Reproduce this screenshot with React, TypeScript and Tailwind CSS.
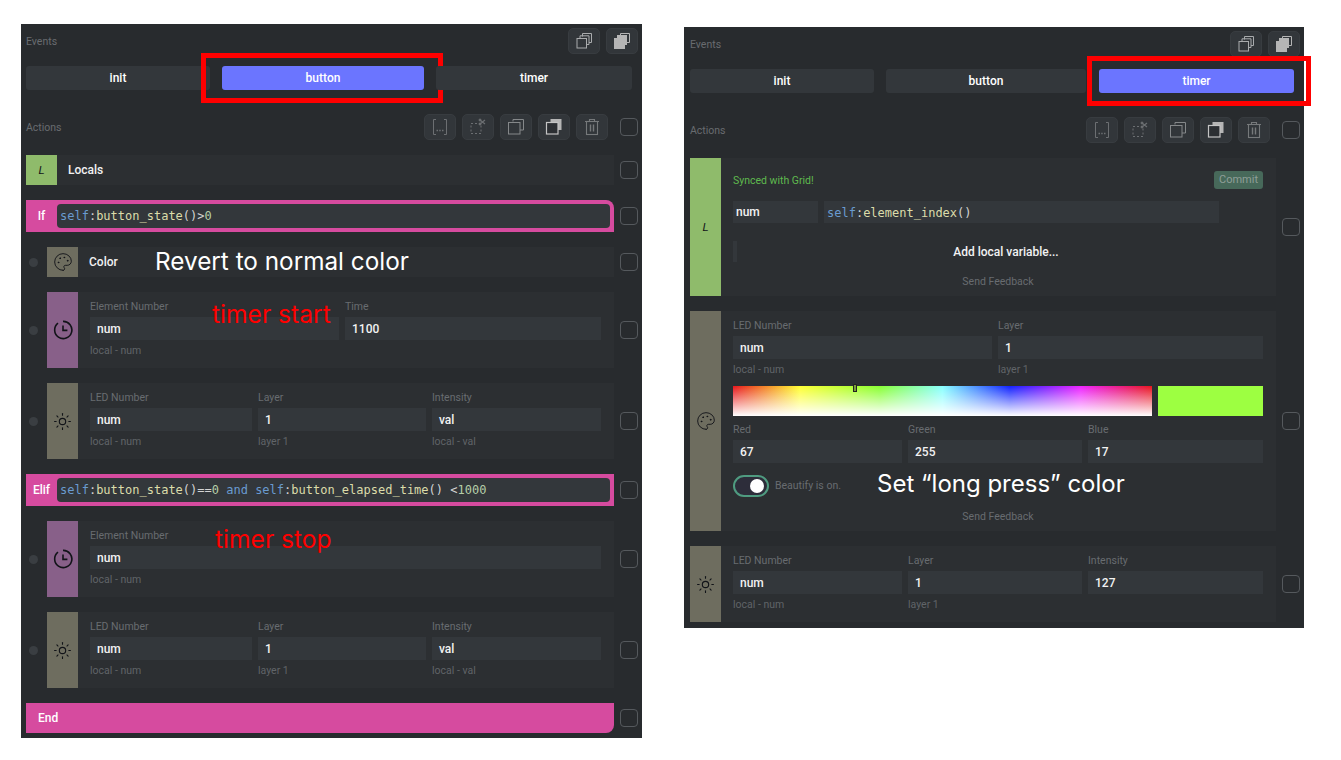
import React from "react";
import { Palette, Sun } from "lucide-react";

const PINK = "bg-[#d64b9f]";

function IconButton({ children }: { children: React.ReactNode }) {
  return (
    <div className="flex h-[26px] w-[32px] items-center justify-center rounded-[5px] border border-[#383c40] bg-[#32363a]">
      {children}
    </div>
  );
}

const StackOutline = () => (
  <svg width="18" height="18" viewBox="0 0 18 18" fill="none" stroke="#a9abad" strokeWidth="1">
    <path d="M7.5 4.5V1.5H16.5V10.5H14" />
    <path d="M5 6.5V3.8H14V12.5H12" />
    <rect x="2" y="6.5" width="9.5" height="9.5" fill="#32363a" />
  </svg>
);
const StackFilled = () => (
  <svg width="18" height="18" viewBox="0 0 18 18" fill="none" stroke="#b5b5b5" strokeWidth="1">
    <path d="M7.5 4.5V1.5H16.5V10.5H14" />
    <rect x="4.5" y="3.5" width="9" height="9" fill="#b5b5b5" />
    <rect x="1.5" y="6.5" width="10" height="10" fill="#b5b5b5" />
  </svg>
);
const Brackets = () => (
  <svg width="18" height="18" viewBox="0 0 18 18" fill="none" stroke="#6c6f72" strokeWidth="1">
    <path d="M5 1.5H2.5V16.5H5M13 1.5H15.5V16.5H13" />
    <path d="M5.5 12.5h1.5M8.2 12.5h1.5M11 12.5h1.5" strokeWidth="1.4" />
  </svg>
);
const Cut = () => (
  <svg width="18" height="18" viewBox="0 0 18 18" fill="none" stroke="#6c6f72" strokeWidth="1">
    <rect x="2" y="5.5" width="10" height="10" strokeDasharray="2 2" />
    <path d="M11 2l5 4M11 6l5-4" strokeWidth="1.2" />
    <circle cx="11" cy="2" r="1" fill="#6c6f72" />
    <circle cx="11" cy="6" r="1" fill="#6c6f72" />
  </svg>
);
const CopyOutline = () => (
  <svg width="18" height="18" viewBox="0 0 18 18" fill="none" stroke="#85888a" strokeWidth="1">
    <path d="M6 3.5V1.5H16.5V12H13" />
    <rect x="1.5" y="4.5" width="11.5" height="11.5" />
  </svg>
);
const CopyFilled = () => (
  <svg width="18" height="18" viewBox="0 0 18 18" fill="none">
    <rect x="5.5" y="1" width="11" height="11" fill="#b5b5b5" />
    <rect x="1.5" y="4.5" width="11.5" height="11.5" fill="#2c2f33" stroke="#c4c4c4" strokeWidth="1.2" />
  </svg>
);
const Trash = () => (
  <svg width="18" height="18" viewBox="0 0 18 18" fill="none" stroke="#76797b" strokeWidth="1.1">
    <path d="M2 3.5H16M6.5 3.5V1.5H11.5V3.5" />
    <rect x="3.5" y="3.5" width="11" height="13" />
    <path d="M7.5 6.5V13.5M10.5 6.5V13.5" strokeWidth="1.4" />
  </svg>
);
const ClockIcon = () => (
  <svg width="20" height="20" viewBox="0 0 20 20" fill="none" stroke="#111318" strokeWidth="1.6">
    <path d="M5 3.2A8.6 8.6 0 1 0 10 1.4" />
    <path d="M10 5.4V10.4H14.4" />
  </svg>
);

function Checkbox() {
  return <div className="h-[18px] w-[18px] shrink-0 rounded-[4px] border border-[#55595d]" />;
}

function Code({ parts }: { parts: [string, string][] }) {
  return (
    <span className="whitespace-pre font-['DejaVu_Sans_Mono',monospace] text-[12px]">
      {parts.map(([t, c], i) => (
        <span key={i} style={{ color: c }}>
          {t}
        </span>
      ))}
    </span>
  );
}

const BLUE = "#6a9bd0";
const FN = "#dcdcaa";
const OP = "#d4d4d4";
const NUM = "#b5cea8";

function Field({ label, value, helper, w }: { label: string; value: string; helper?: string; w: string }) {
  return (
    <div className={w}>
      <div className="mb-[4px] h-[14px] text-[10.5px] leading-[16px] text-[#686c70]">{label}</div>
      <div className="flex h-[23px] items-center bg-[#33373b] pl-[7px] text-[12px] font-[500] text-[#f2f2f2]">{value}</div>
      {helper !== undefined && <div className="mt-[3px] h-[14px] text-[10.5px] leading-[16px] text-[#606468]">{helper}</div>}
    </div>
  );
}

function Row({ children }: { children: React.ReactNode }) {
  return (
    <div className="flex items-center gap-[6px] pr-[4px]">
      <div className="min-w-0 flex-1">{children}</div>
      <Checkbox />
    </div>
  );
}

function Block({ color, icon, dot, children, minH }: { color: string; icon: React.ReactNode; dot?: boolean; children: React.ReactNode; minH: string }) {
  return (
    <div className="flex items-center">
      {dot && (
        <div className="flex w-[21px] shrink-0 justify-start pl-[3px]">
          <div className="h-[9px] w-[9px] rounded-full bg-[#3a3e42]" />
        </div>
      )}
      <div className={`flex min-w-0 flex-1 bg-[#2c2f32] ${minH}`}>
        <div className={`flex w-[31px] shrink-0 items-center justify-center ${color}`}>{icon}</div>
        {children}
      </div>
    </div>
  );
}

const TAUPE = "bg-[#6e6d5f]";
const PURPLE = "bg-[#886089]";
const GREEN = "bg-[#8fbb6b]";
const sun = <Sun size={19} strokeWidth={1.4} color="#111318" />;
const palette = <Palette size={20} strokeWidth={1.1} color="#111318" />;
const lIcon = <span className="font-['Liberation_Sans',sans-serif] text-[11px] italic text-[#111318]">L</span>;

function Body({ children }: { children: React.ReactNode }) {
  return <div className="relative min-w-0 flex-1 pl-[12px] pr-[13px] pt-[7px] pb-[11px]">{children}</div>;
}

function TimerBlock({ second, note, noteClass }: { second?: boolean; note: string; noteClass: string }) {
  return (
    <Block color={PURPLE} icon={<ClockIcon />} dot minH="h-[76px]">
      <Body>
        <div className="flex gap-[6px]">
          {second ? (
            <>
              <Field w="w-[249px]" label="Element Number" value="num" helper="local - num" />
              <Field w="flex-1" label="Time" value="1100" />
            </>
          ) : (
            <Field w="flex-1" label="Element Number" value="num" helper="local - num" />
          )}
        </div>
        <span className={`absolute whitespace-nowrap font-['Inter',sans-serif] text-[24.6px] leading-[30px] text-[#ff0000] ${noteClass}`}>{note}</span>
      </Body>
    </Block>
  );
}

function LedBlock({ dot, w, third, helper3 }: { dot?: boolean; w: string[]; third: string; helper3?: string }) {
  return (
    <Block color={TAUPE} icon={sun} dot={dot} minH="h-[76px]">
      <Body>
        <div className="flex gap-[6px]">
          <Field w={w[0]} label="LED Number" value="num" helper="local - num" />
          <Field w={w[1]} label="Layer" value="1" helper="layer 1" />
          <Field w={w[2]} label="Intensity" value={third} helper={helper3} />
        </div>
      </Body>
    </Block>
  );
}

function Conditional({ label, parts, rounded }: { label: string; parts: [string, string][]; rounded: string }) {
  return (
    <div className={`flex h-[32px] ${PINK} py-[4px] pr-[4px] ${rounded}`}>
      <div className="flex w-[31px] shrink-0 items-center justify-center text-[12px] font-[480] text-white">{label}</div>
      <div className="flex min-w-0 flex-1 items-center rounded-[4px] bg-[#33373b] pl-[3px]">
        <Code parts={parts} />
      </div>
    </div>
  );
}

function Tab({ label, w, active, box }: { label: string; w: string; active?: boolean; box?: string }) {
  return (
    <div className={`relative flex h-[24px] items-center justify-center rounded-[3px] text-[12px] font-[480] text-white ${w} ${active ? "bg-[#6b75ff]" : "bg-[#33373b]"}`}>
      {label}
      {box && <div className={`absolute border-[5px] border-[#ff0000] ${box}`} />}
    </div>
  );
}

function Header({ tabs }: { tabs: React.ReactNode }) {
  return (
    <>
      <div className="flex h-[26px] items-center justify-between pr-[4px]">
        <span className="pt-[2px] text-[10.5px] text-[#686c70]">Events</span>
        <div className="flex gap-[6px]">
          <IconButton><StackOutline /></IconButton>
          <IconButton><StackFilled /></IconButton>
        </div>
      </div>
      <div className="mt-[12px] flex">{tabs}</div>
      <div className="mt-[24px] flex h-[26px] items-center justify-between pr-[4px]">
        <span className="pt-[2px] text-[10.5px] text-[#686c70]">Actions</span>
        <div className="flex items-center gap-[12px]">
          <div className="flex gap-[6px]">
            <IconButton><Brackets /></IconButton>
            <IconButton><Cut /></IconButton>
            <IconButton><CopyOutline /></IconButton>
            <IconButton><CopyFilled /></IconButton>
            <IconButton><Trash /></IconButton>
          </div>
          <Checkbox />
        </div>
      </div>
    </>
  );
}

function LeftPanel() {
  return (
    <div className="w-[621px] shrink-0 bg-[#282b2e] pb-[5px] pl-[5px] pt-[4px]">
      <Header
        tabs={
          <>
            <Tab label="init" w="w-[184px]" />
            <Tab label="button" w="ml-[12px] w-[202px]" active box="-left-[21px] -right-[19px] -top-[13px] -bottom-[13px]" />
            <Tab label="timer" w="ml-[12px] w-[196px]" />
          </>
        }
      />
      <div className="mt-[15px] flex flex-col gap-[15px]">
        <Row>
          <Block color={GREEN} icon={lIcon} minH="h-[30px]">
            <div className="flex items-center pl-[11px] text-[12px] font-[500] text-[#f2f2f2]">Locals</div>
          </Block>
        </Row>
        <Row>
          <Conditional
            label="If"
            rounded="rounded-tr-[8px]"
            parts={[["self", BLUE], [":", OP], ["button_state", FN], ["()>", OP], ["0", NUM]]}
          />
        </Row>
        <Row>
          <Block color={TAUPE} icon={palette} dot minH="h-[30px]">
            <div className="flex items-center pl-[11px]">
              <span className="w-[66px] text-[12px] font-[500] text-[#f2f2f2]">Color</span>
              <span className="mb-[1px] whitespace-nowrap font-['Inter',sans-serif] text-[24.3px] text-white">Revert to normal color</span>
            </div>
          </Block>
        </Row>
        <Row>
          <TimerBlock second note="timer start" noteClass="left-[134px] top-[7px]" />
        </Row>
        <Row>
          <LedBlock dot w={["w-[162px]", "w-[168px]", "w-[169px]"]} third="val" helper3="local - val" />
        </Row>
        <Row>
          <Conditional
            label="Elif"
            rounded=""
            parts={[
              ["self", BLUE], [":", OP], ["button_state", FN], ["()==", OP], ["0", NUM], [" ", OP], ["and", BLUE], [" ", OP],
              ["self", BLUE], [":", OP], ["button_elapsed_time", FN], ["() <", OP], ["1000", NUM],
            ]}
          />
        </Row>
        <Row>
          <TimerBlock note="timer stop" noteClass="left-[137px] top-[3px]" />
        </Row>
        <Row>
          <LedBlock dot w={["w-[162px]", "w-[168px]", "w-[169px]"]} third="val" helper3="local - val" />
        </Row>
        <Row>
          <div className={`flex h-[30px] items-center rounded-br-[8px] pl-[12px] text-[12px] font-[480] text-white ${PINK}`}>End</div>
        </Row>
      </div>
    </div>
  );
}

function Feedback() {
  return <div className="h-[14px] text-center text-[10.5px] leading-[16px] text-[#686c70]">Send Feedback</div>;
}

function RightPanel() {
  return (
    <div className="mt-[3px] w-[620px] shrink-0 bg-[#282b2e] pb-[6px] pl-[6px] pt-[4px]">
      <Header
        tabs={
          <>
            <Tab label="init" w="w-[184px]" />
            <Tab label="button" w="ml-[12px] w-[200px]" />
            <Tab label="timer" w="ml-[13px] w-[195px]" active box="-left-[12px] -right-[17px] -top-[13px] -bottom-[13px]" />
          </>
        }
      />
      <div className="mt-[15px] flex flex-col gap-[15px]">
        <Row>
          <Block color={GREEN} icon={lIcon} minH="h-[138px]">
            <div className="min-w-0 flex-1 pl-[12px] pr-[13px] pt-[13px]">
              <div className="flex h-[18px] items-center justify-between">
                <span className="pt-[1px] text-[10.5px] text-[#5fb94e]">Synced with Grid!</span>
                <span className="flex h-[18px] w-[49px] items-center justify-center rounded-[3px] bg-[#47695a] text-[11px] text-[#8f9f98]">Commit</span>
              </div>
              <div className="mt-[12px] flex h-[22px] gap-[6px] pr-[44px]">
                <div className="flex w-[85px] items-center bg-[#33373b] pl-[3px] text-[12px] font-[500] text-[#f2f2f2]">num</div>
                <div className="flex flex-1 items-center bg-[#33373b] pl-[3px] pt-[1px]">
                  <Code parts={[["self", BLUE], [":", OP], ["element_index", FN], ["()", OP]]} />
                </div>
              </div>
              <div className="mt-[18px] flex h-[21px] items-center">
                <div className="h-[21px] w-[4px] bg-[#33373b]" />
                <div className="flex-1 pl-[12px] text-center text-[12px] font-[500] text-[#f2f2f2]">Add local variable...</div>
              </div>
              <div className="mt-[12px]"><Feedback /></div>
            </div>
          </Block>
        </Row>
        <Row>
          <Block color={TAUPE} icon={palette} minH="h-[220px]">
            <div className="min-w-0 flex-1 pl-[12px] pr-[13px] pt-[7px]">
              <div className="flex gap-[6px]">
                <Field w="w-[259px]" label="LED Number" value="num" helper="local - num" />
                <Field w="flex-1" label="Layer" value="1" helper="layer 1" />
              </div>
              <div className="mt-[10px] flex h-[30px] gap-[6px]">
                <div className="relative flex-1 bg-[linear-gradient(to_bottom,transparent,white),linear-gradient(to_right,#e8141c,#ffff33_16%,#88ff33_35%,#88ffff_50%,#1122ff_66%,#ee22ff_83%,#e8141c)]">
                  <div className="absolute -top-[2px] left-[120px] h-[8px] w-[4px] border border-[#222] bg-[#7a9c3a]" />
                </div>
                <div className="w-[105px] bg-[#9dff41]" />
              </div>
              <div className="mt-[6px] flex gap-[6px]">
                <Field w="w-[169px]" label="Red" value="67" />
                <Field w="w-[174px]" label="Green" value="255" />
                <Field w="flex-1" label="Blue" value="17" />
              </div>
              <div className="mt-[12px] flex h-[22px] items-center">
                <div className="flex h-[22px] w-[36px] items-center justify-end rounded-full border-2 border-[#4f9b80] bg-[#2d2d3a] pr-[3px]">
                  <div className="h-[14px] w-[14px] rounded-full bg-white" />
                </div>
                <span className="ml-[6px] w-[102px] text-[10.5px] text-[#686c70]">Beautify is on.</span>
                <span className="mb-[4px] whitespace-nowrap font-['Inter',sans-serif] text-[24px] text-white">Set “long press” color</span>
              </div>
              <div className="mt-[12px]"><Feedback /></div>
            </div>
          </Block>
        </Row>
        <Row>
          <LedBlock w={["w-[169px]", "w-[174px]", "flex-1"]} third="127" />
        </Row>
      </div>
    </div>
  );
}

export default function App() {
  return (
    <div className="flex min-h-[760px] items-start gap-[42px] bg-white pl-[21px] pt-[24px] font-['Roboto',sans-serif]">
      <LeftPanel />
      <RightPanel />
    </div>
  );
}
